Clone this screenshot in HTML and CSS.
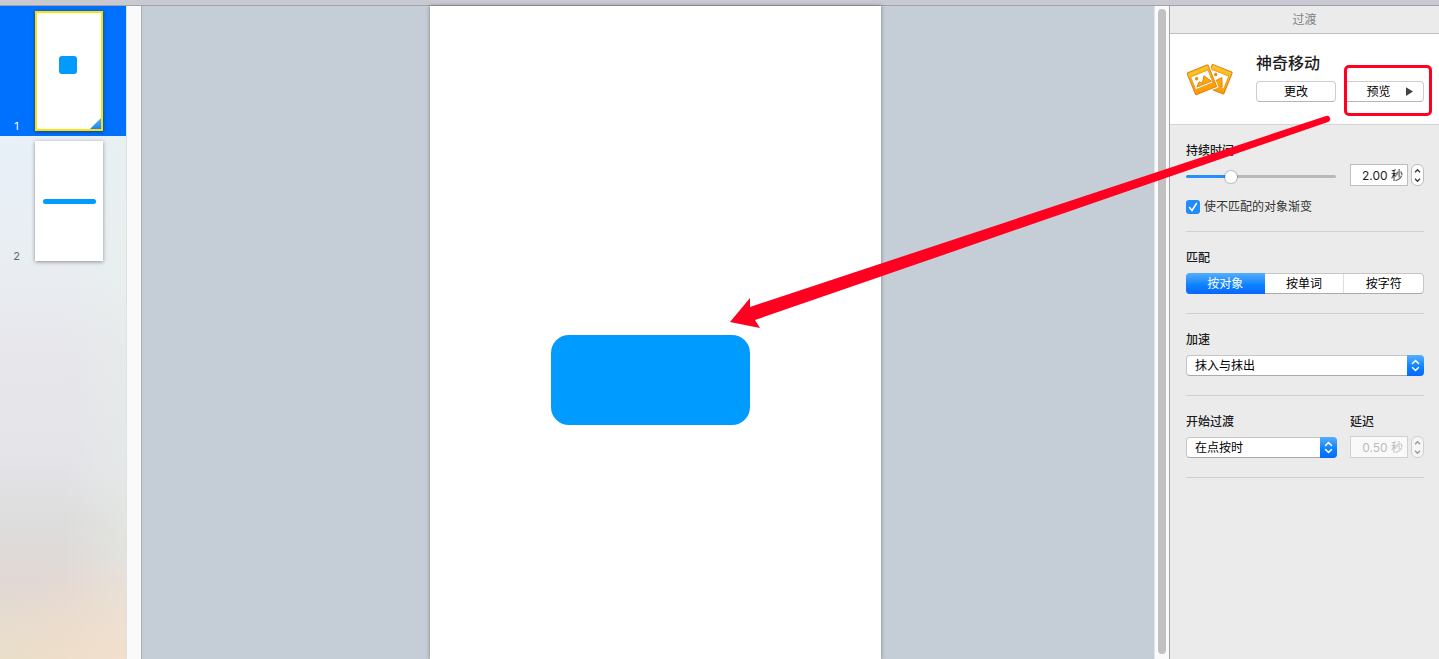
FILE: index.html
```html
<!DOCTYPE html>
<html lang="zh-CN">
<head>
<meta charset="utf-8">
<title>过渡</title>
<link rel="stylesheet" href="styles.css">
</head>
<body>
<div class="toolbar-edge"></div>
<div class="workspace">
  <nav class="navigator">
    <button class="slide selected">
      <span class="slide-number">1</span>
      <span class="thumb"><span class="thumb-square"></span><span class="thumb-corner"></span></span>
    </button>
    <button class="slide">
      <span class="slide-number">2</span>
      <span class="thumb"><span class="thumb-line"></span></span>
    </button>
  </nav>
  <div class="gutter"></div>
  <main class="canvas">
    <div class="page"><div class="shape"></div></div>
    <div class="scrollbar"><div class="scroll-thumb"></div></div>
  </main>
  <aside class="inspector">
    <h1 class="inspector-title">过渡</h1>
    <div class="effect">
      <svg class="effect-icon" viewBox="0 0 50 36">
        <defs>
          <linearGradient id="gold" x1="0" y1="0" x2="0" y2="1">
            <stop offset="0" stop-color="#ffc428"/><stop offset="1" stop-color="#ff9a00"/>
          </linearGradient>
        </defs>
        <g transform="translate(27 3) rotate(22)">
          <rect width="22" height="24" rx="1" fill="url(#gold)" stroke="#d9820f"/>
          <path d="M2 5h18v14H2z" fill="#fff" stroke="#e8950f" stroke-width=".8"/>
          <circle cx="7" cy="8.500" r="1.700" fill="#e88c0c"/>
          <path d="M6 18l8-9 4 9z" fill="#ffa600" stroke="#d9820f" stroke-width=".8"/>
        </g>
        <g transform="translate(1 12) rotate(-22)">
          <rect x="-1.500" y="-1.500" width="26" height="27" rx="1" fill="#fff"/>
          <rect width="23" height="24" rx="1" fill="url(#gold)" stroke="#d9820f"/>
          <path d="M2 5h19v14H2z" fill="#fff" stroke="#e8950f" stroke-width=".8"/>
          <circle cx="7" cy="9" r="1.700" fill="#e88c0c"/>
          <path d="M4 17l4-4 3 2 4-6 5 8z" fill="#ffa600" stroke="#d9820f" stroke-width=".8"/>
        </g>
      </svg>
      <div class="effect-main">
        <h2 class="effect-name">神奇移动</h2>
        <div class="effect-actions">
          <button class="push">更改</button>
          <button class="push preview">预览<svg class="play" viewBox="0 0 8 10"><path d="M0 0l8 5-8 5z"/></svg></button>
        </div>
      </div>
      <div class="highlight"></div>
    </div>
    <div class="sections">
      <section class="section duration">
        <label class="label" for="duration">持续时间</label>
        <div class="row">
          <input class="slider" id="duration" type="range" min="0" max="100" value="28">
          <div class="number">
            <input class="field" type="text" value="2.00 秒" aria-label="持续时间">
            <div class="stepper">
              <button class="step" aria-label="增加"><svg viewBox="0 0 6 4"><path d="M0 3.500l3-3 3 3"/></svg></button>
              <button class="step" aria-label="减少"><svg viewBox="0 0 6 4"><path d="M0 .5l3 3 3-3"/></svg></button>
            </div>
          </div>
        </div>
        <label class="check"><input class="checkbox" type="checkbox" checked><svg class="tick" viewBox="0 0 14 14"><path d="M3.500 7.500l2.500 3 4.500-7"/></svg>使不匹配的对象渐变</label>
      </section>
      <section class="section">
        <h3 class="label">匹配</h3>
        <div class="segments">
          <button class="segment active">按对象</button>
          <button class="segment">按单词</button>
          <button class="segment">按字符</button>
        </div>
      </section>
      <section class="section">
        <label class="label" for="easing">加速</label>
        <div class="popup">
          <select class="select" id="easing"><option>抹入与抹出</option></select>
          <svg class="arrows" viewBox="0 0 17 21"><path d="M5.500 8.500l3-3 3 3M5.500 12.500l3 3 3-3"/></svg>
        </div>
      </section>
      <section class="section">
        <div class="start">
          <div class="start-event">
            <label class="label" for="start">开始过渡</label>
            <div class="popup">
              <select class="select" id="start"><option>在点按时</option></select>
              <svg class="arrows" viewBox="0 0 17 21"><path d="M5.500 8.500l3-3 3 3M5.500 12.500l3 3 3-3"/></svg>
            </div>
          </div>
          <div class="delay">
            <label class="label" for="delay">延迟</label>
            <div class="number">
              <input class="field" id="delay" type="text" value="0.50 秒" disabled>
              <div class="stepper off">
                <button class="step" aria-label="增加" disabled><svg viewBox="0 0 6 4"><path d="M0 3.500l3-3 3 3"/></svg></button>
                <button class="step" aria-label="减少" disabled><svg viewBox="0 0 6 4"><path d="M0 .5l3 3 3-3"/></svg></button>
              </div>
            </div>
          </div>
        </div>
      </section>
    </div>
  </aside>
  <svg class="pointer" viewBox="0 0 600 216"><path d="M0 209L20 185V194L596 3Q599 2 600 5Q601 8 598 9L25 207L30 215Z"/></svg>
</div>
</body>
</html>
```

FILE: styles.css
```css
* { box-sizing: border-box; }

body {
  margin: 0;
  height: 100vh;
  display: flex;
  flex-direction: column;
  overflow: hidden;
  font-family: Inter, "Noto Sans CJK SC", sans-serif;
  font-size: 12px;
  line-height: 18px;
  color: #1c1c1c;
}

button, input, select { font: inherit; color: inherit; margin: 0; }

.toolbar-edge {
  flex: none;
  height: 6px;
  background: #c9c9d1;
  border-bottom: 1px solid #a2a2aa;
}

.workspace {
  position: relative;
  flex: 1;
  min-height: 0;
  display: flex;
}

.navigator {
  width: 127px;
  flex: none;
  border-right: 1px solid #e0e0e0;
  background:
    radial-gradient(ellipse 140px 110px at 100% 100%, rgba(246, 220, 200, 0.7), transparent),
    linear-gradient(90deg, transparent 50%, rgba(232, 240, 232, 0.4)),
    linear-gradient(#e8f0f8 20%, #e9eef3 38%, #e7e7ec 52%, #e3e3e8 70%, #dddcdb 80%, #e1d8d5 88%, #e9dfca 100%);
}

.slide {
  display: flex;
  align-items: flex-end;
  width: 100%;
  height: 130px;
  padding: 5px 0;
  border: 0;
  background: none;
  font-size: 11px;
  line-height: 10px;
  color: #666;
}

.slide.selected { background: #0070ff; color: #fff; }

.slide-number { width: 35px; text-align: center; padding-right: 2px; }

.thumb {
  position: relative;
  width: 68px;
  height: 120px;
  display: flex;
  align-items: center;
  justify-content: center;
  background: #fff;
  box-shadow: 0 1px 4px rgba(0, 0, 0, 0.4);
}

.selected .thumb { border: 2px solid #ffe000; padding: 0 2px 12px 0; }

.thumb-square { width: 18px; height: 18px; border-radius: 3px; background: #009bff; }

.thumb-line { width: 53px; height: 5px; border-radius: 3px; background: #009bff; }

.thumb-corner {
  position: absolute;
  right: 0;
  bottom: 0;
  width: 11px;
  height: 11px;
  background: linear-gradient(#57b0f8, #1d85f4);
  clip-path: polygon(100% 0, 100% 100%, 0 100%);
}

.gutter {
  flex: none;
  width: 15px;
  background: #fafafa;
  border-right: 1px solid #adadad;
}

.canvas {
  position: relative;
  flex: 1;
  display: flex;
  justify-content: center;
  background: #c5cdd7;
}

.page {
  width: 451px;
  padding: 329px 131px 0 121px;
  background: #fff;
  box-shadow: 0 0 4px rgba(0, 0, 0, 0.4);
}

.shape { height: 90px; border-radius: 18px; background: #009bff; }

.scrollbar {
  position: absolute;
  top: 0;
  right: 0;
  bottom: 0;
  width: 15px;
  padding: 3px 3px 5px;
  background: #fafafa;
  border-left: 1px solid #e4e4e4;
}

.scroll-thumb { height: 100%; border-radius: 4px; background: #c1c1c1; }

.inspector {
  flex: none;
  width: 270px;
  background: #ebebeb;
  border-left: 1px solid #a5a5a5;
}

.inspector-title {
  margin: 0;
  padding: 5px 0 4px;
  font-size: 12px;
  font-weight: 400;
  text-align: center;
  color: #7d8388;
  border-bottom: 1px solid #bfbfbf;
}

.effect {
  position: relative;
  display: flex;
  gap: 21px;
  height: 91px;
  padding: 17px 15px 0 16px;
  background: #fff;
  border-bottom: 1px solid #d4d4d4;
}

.effect-icon { flex: none; width: 49px; height: 36px; margin-top: 10px; }

.effect-main { flex: 1; }

.effect-name { margin: 0 0 6px; font-size: 16px; line-height: 24px; font-weight: 500; }

.effect-actions { display: grid; grid-template-columns: 1fr 1fr; gap: 8px; }

.push {
  display: flex;
  align-items: center;
  justify-content: center;
  height: 21px;
  padding: 0;
  color: #000;
  background: #fff;
  border: 1px solid #cdcdcd;
  border-bottom-color: #b5b5b5;
  border-radius: 4px;
}

.preview { gap: 15px; padding-left: 11px; }

.play { width: 7px; height: 9px; fill: #444; }

.highlight {
  position: absolute;
  top: 31px;
  right: 7px;
  width: 88px;
  height: 51px;
  border: 3px solid #ff0020;
  border-radius: 5px;
  pointer-events: none;
}

.sections { padding: 0 15px 0 16px; }

.section { padding: 17px 0 19px; border-bottom: 1px solid #d0d0d0; }

.label {
  display: block;
  margin: 0 0 6px;
  font-size: 12px;
  line-height: 18px;
  font-weight: 500;
}

.duration { padding-bottom: 15px; }

.duration .label { margin-bottom: 4px; }

.row { display: flex; align-items: center; justify-content: space-between; gap: 14px; }

.slider {
  appearance: none;
  flex: 1;
  min-width: 0;
  height: 22px;
  padding-top: 2px;
  background: none;
}

.slider::-webkit-slider-runnable-track {
  height: 3px;
  border-radius: 2px;
  background: linear-gradient(90deg, #2490ff 28%, #b9b9b9 28%);
}

.slider::-webkit-slider-thumb {
  appearance: none;
  width: 12px;
  height: 12px;
  margin-top: -4px;
  border-radius: 50%;
  background: #fff;
  box-shadow: 0 0 1px 1px rgba(0, 0, 0, 0.2);
}

.number { display: flex; gap: 3px; }

.field {
  width: 58px;
  height: 22px;
  padding: 0 4px 1px;
  text-align: right;
  background: #fff;
  border: 1px solid #bdbdbd;
}

.field:disabled { color: #bcbcbc; background: #f9f9f9; border-color: #d0d0d0; }

.stepper {
  width: 13px;
  height: 22px;
  display: flex;
  flex-direction: column;
  padding: 1px 0;
  background: #fff;
  border: 1px solid #bdbdbd;
  border-radius: 6px;
}

.step {
  flex: 1;
  display: flex;
  align-items: center;
  justify-content: center;
  padding: 0;
  border: 0;
  background: none;
}

.step svg {
  flex: none;
  width: 5px;
  height: 4px;
  fill: none;
  stroke: #333;
  stroke-width: 1.500;
  overflow: visible;
}

.stepper.off { background: #f5f5f5; border-color: #d0d0d0; }

.off .step svg { stroke: #999; }

.check {
  position: relative;
  display: flex;
  align-items: center;
  gap: 4px;
  margin-top: 12px;
  color: #333;
}

.checkbox {
  appearance: none;
  width: 14px;
  height: 14px;
  border-radius: 3px;
  background: #248bfb;
}

.tick {
  position: absolute;
  left: 0;
  width: 14px;
  height: 14px;
  fill: none;
  stroke: #fff;
  stroke-width: 1.500;
  stroke-linecap: round;
  visibility: hidden;
}

.checkbox:checked + .tick { visibility: visible; }

.segments {
  display: flex;
  height: 21px;
  border: 1px solid #c6c6c6;
  border-bottom-color: #ababab;
  border-radius: 4px;
  background: #fff;
}

.segment {
  flex: 1;
  padding: 0;
  border: 0;
  border-left: 1px solid #dedede;
  background: none;
  color: #000;
}

.segment.active {
  margin: -1px 0 -1px -1px;
  border: 0;
  border-radius: 4px 0 0 4px;
  color: #fff;
  background: linear-gradient(#57aefc, #0a80ff 60%, #0a66ff);
}

.active + .segment { border-left: 0; }

.popup { position: relative; }

.select {
  display: block;
  appearance: none;
  width: 100%;
  height: 21px;
  padding: 0 20px 0 8px;
  color: #000;
  background: #fff;
  border: 1px solid #c6c6c6;
  border-bottom-color: #ababab;
  border-radius: 4px;
}

.arrows {
  position: absolute;
  top: 0;
  right: 0;
  width: 17px;
  height: 21px;
  border-radius: 0 4px 4px 0;
  background: linear-gradient(#57aefc, #0a80ff 60%, #0a66ff);
  fill: none;
  stroke: #fff;
  stroke-width: 1.500;
  stroke-linecap: round;
  pointer-events: none;
}

.start { display: flex; gap: 13px; }

.start-event { flex: 1; }

.delay { height: 45px; }

.delay .label { margin-bottom: 5px; }

.pointer {
  position: absolute;
  top: 107px;
  right: 109px;
  width: 600px;
  height: 216px;
  fill: #ff0020;
  overflow: visible;
  pointer-events: none;
}
```
